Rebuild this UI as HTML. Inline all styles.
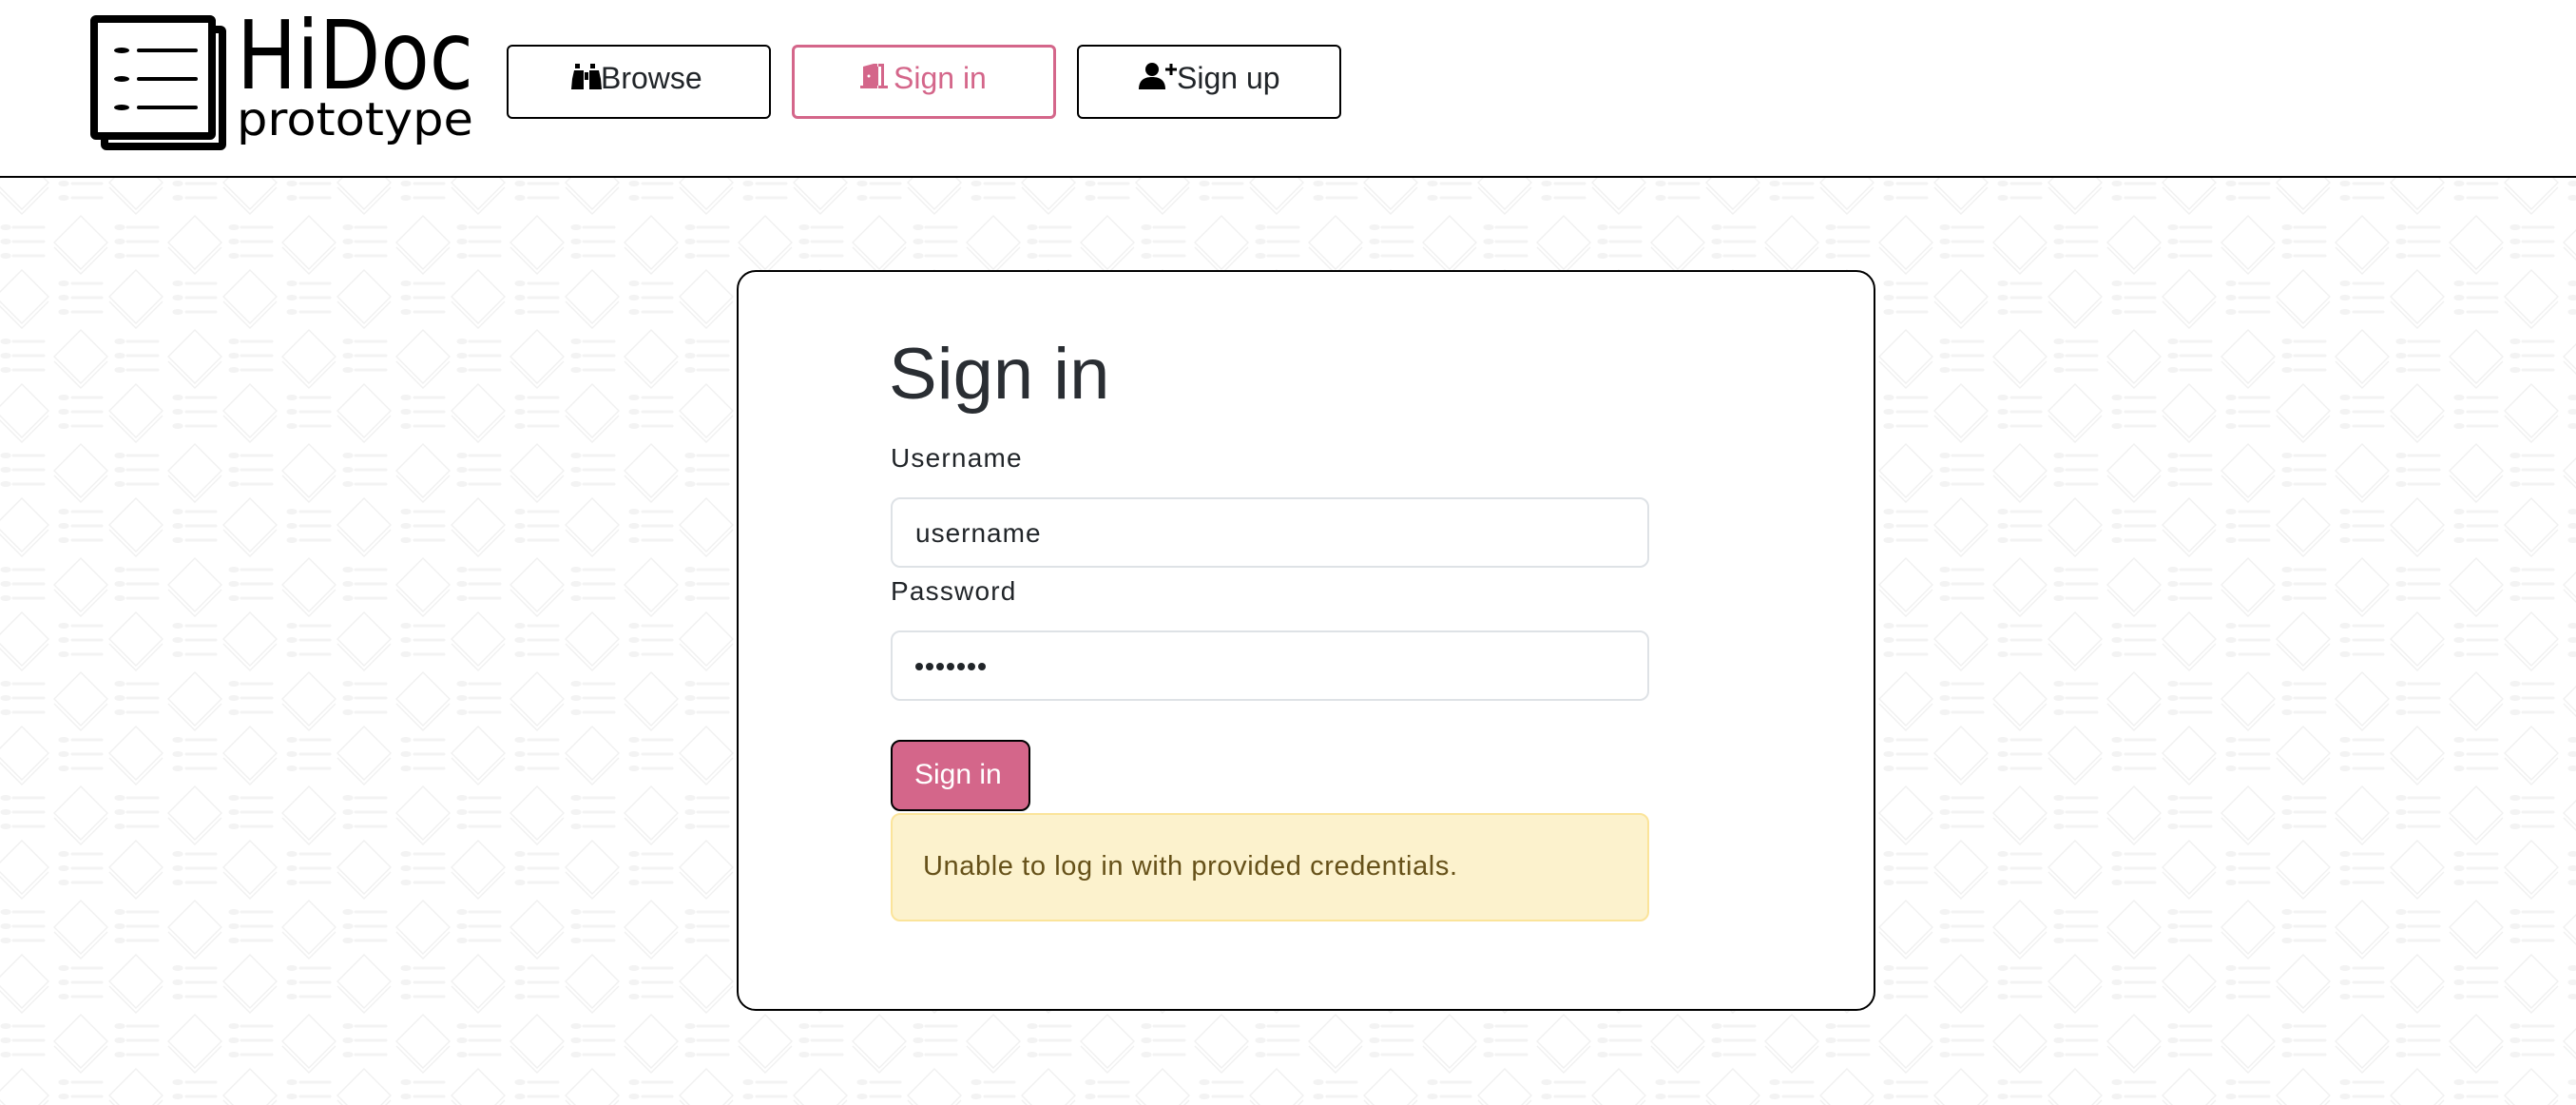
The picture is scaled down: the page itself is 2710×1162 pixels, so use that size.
<!DOCTYPE html>
<html><head><meta charset="utf-8"><style>
*{box-sizing:border-box;margin:0;padding:0}
body{width:2710px;height:1162px;position:relative;overflow:hidden;background:#fff;font-family:"Liberation Sans",sans-serif;color:#212529}
#bg{position:absolute;left:0;top:0}
header{position:absolute;left:0;top:0;width:2710px;height:187px;background:#fff;border-bottom:2px solid #000}
.btn{position:absolute;top:47px;height:78px;border:2px solid #000;border-radius:6px;background:#fff}
.card{position:absolute;left:775px;top:284px;width:1198px;height:779px;background:#fff;border:2px solid #000;border-radius:20px}
.abs{position:absolute;white-space:nowrap}
.inp{position:absolute;left:937px;width:798px;height:74px;border:2px solid #dee2e6;border-radius:10px;background:#fff}
</style></head><body>
<svg id="bg" width="2710" height="1162">
<defs><pattern id="p" patternUnits="userSpaceOnUse" x="0" y="0" width="120" height="120">
<g fill="none" stroke="#f0f0f0" stroke-width="1.4">
<path d="M23 44 L51 72 L23 100 L-5 72 Z"/><path d="M-5 77 L23 105 L51 77"/>
<path d="M143 44 L171 72 L143 100 L115 72 Z"/><path d="M115 77 L143 105 L171 77"/>
<path d="M85 -13 L113 15 L85 43 L57 15 Z"/><path d="M57 20 L85 48 L113 20"/>
<path d="M85 107 L113 135 L85 163 L57 135 Z"/><path d="M57 140 L85 168 L113 140"/>
</g>
<g stroke="#f3f3f3" stroke-width="3" stroke-linecap="round" fill="#f3f3f3">
<path d="M76 58H107M76 73H107M76 88H107M14 -1H46M14 14H46M14 29H46M14 119H46"/>
<ellipse cx="67" cy="58" rx="4" ry="1.5"/><ellipse cx="67" cy="73" rx="4" ry="1.5"/><ellipse cx="67" cy="88" rx="4" ry="1.5"/>
<ellipse cx="6" cy="-1" rx="4" ry="1.5"/><ellipse cx="6" cy="14" rx="4" ry="1.5"/><ellipse cx="6" cy="29" rx="4" ry="1.5"/><ellipse cx="6" cy="119" rx="4" ry="1.5"/>
</g></pattern></defs>
<rect x="0" y="187" width="2710" height="975" fill="url(#p)"/>
</svg>
<header>
<svg class="abs" style="left:0;top:0" width="520" height="180">
<rect x="110" y="31" width="124" height="123" fill="#fff" stroke="#000" stroke-width="8" rx="2"/>
<rect x="99" y="20" width="124" height="123" fill="#fff" stroke="#000" stroke-width="8" rx="2"/>
<g stroke="#000" stroke-width="4" stroke-linecap="round"><path d="M146 53H206M146 83H206M146 113H206"/></g>
<g fill="#000"><ellipse cx="128" cy="53" rx="8" ry="3"/><ellipse cx="128" cy="83" rx="8" ry="3"/><ellipse cx="128" cy="113" rx="8" ry="3"/></g>
<text x="249" y="93" font-family="DejaVu Sans" font-size="100" textLength="249" lengthAdjust="spacingAndGlyphs">HiDoc</text>
<text x="249" y="142" font-family="DejaVu Sans" font-size="48" textLength="249" lengthAdjust="spacingAndGlyphs">prototype</text>
</svg>
<div class="btn" style="left:533px;width:278px"></div>
<svg class="abs" style="left:601px;top:67px" width="32" height="27" viewBox="0 0 32 27"><path d="M4 0h5v5H4zM20 0h5v5h-5zM3 7h10v20H0L1 16zM19 7h10l2 9 1 11H19zM14 9h4v8h-4z" fill="#000"/></svg>
<span class="abs" style="left:632px;top:64px;font-size:32px">Browse</span>
<div class="btn" style="left:833px;width:278px;border:3px solid #d4668a"></div>
<svg class="abs" style="left:905px;top:67px" width="30" height="26" viewBox="0 0 30 26"><path d="M3 3L14 0h4v23h4V3h-3V0h6v23h4v3H19V3h-1v23H0v-3h3z" fill="#d4668a"/><circle cx="9" cy="13" r="1.5" fill="#fff"/></svg>
<span class="abs" style="left:940px;top:64px;font-size:32px;color:#d4668a">Sign in</span>
<div class="btn" style="left:1133px;width:278px"></div>
<svg class="abs" style="left:1198px;top:66px" width="42" height="28" viewBox="0 0 42 28"><circle cx="14" cy="7" r="7"/><path d="M0 28c0-9 5-13 14-13s14 4 14 13z"/><path d="M28 7h12M34 1v12" stroke="#000" stroke-width="3"/></svg>
<span class="abs" style="left:1238px;top:64px;font-size:32px">Sign up</span>
</header>
<div class="card"></div>
<div class="abs" style="left:935px;top:349px;font-size:76px;line-height:90px;color:#2a2e33">Sign in</div>
<div class="abs" style="left:937px;top:466px;font-size:28px;letter-spacing:1.2px">Username</div>
<div class="inp" style="top:523px"></div>
<div class="abs" style="left:963px;top:545px;font-size:28px;letter-spacing:1px">username</div>
<div class="abs" style="left:937px;top:606px;font-size:28px;letter-spacing:1.2px">Password</div>
<div class="inp" style="top:663px"></div>
<svg class="abs" style="left:963px;top:696px" width="80" height="10"><g fill="#212529"><circle cx="4" cy="5" r="4"/><circle cx="15" cy="5" r="4"/><circle cx="26" cy="5" r="4"/><circle cx="37" cy="5" r="4"/><circle cx="48" cy="5" r="4"/><circle cx="59" cy="5" r="4"/><circle cx="70" cy="5" r="4"/></g></svg>
<div class="abs" style="left:937px;top:778px;width:147px;height:75px;background:#d4668a;border:2px solid #000;border-radius:10px"></div>
<div class="abs" style="left:962px;top:798px;font-size:30px;color:#fff">Sign in</div>
<div class="abs" style="left:937px;top:855px;width:798px;height:114px;background:#fcf2cd;border:2px solid #fbe49a;border-radius:10px"></div>
<div class="abs" style="left:971px;top:895px;font-size:29px;color:#665119;letter-spacing:0.6px">Unable to log in with provided credentials.</div>
</body></html>
